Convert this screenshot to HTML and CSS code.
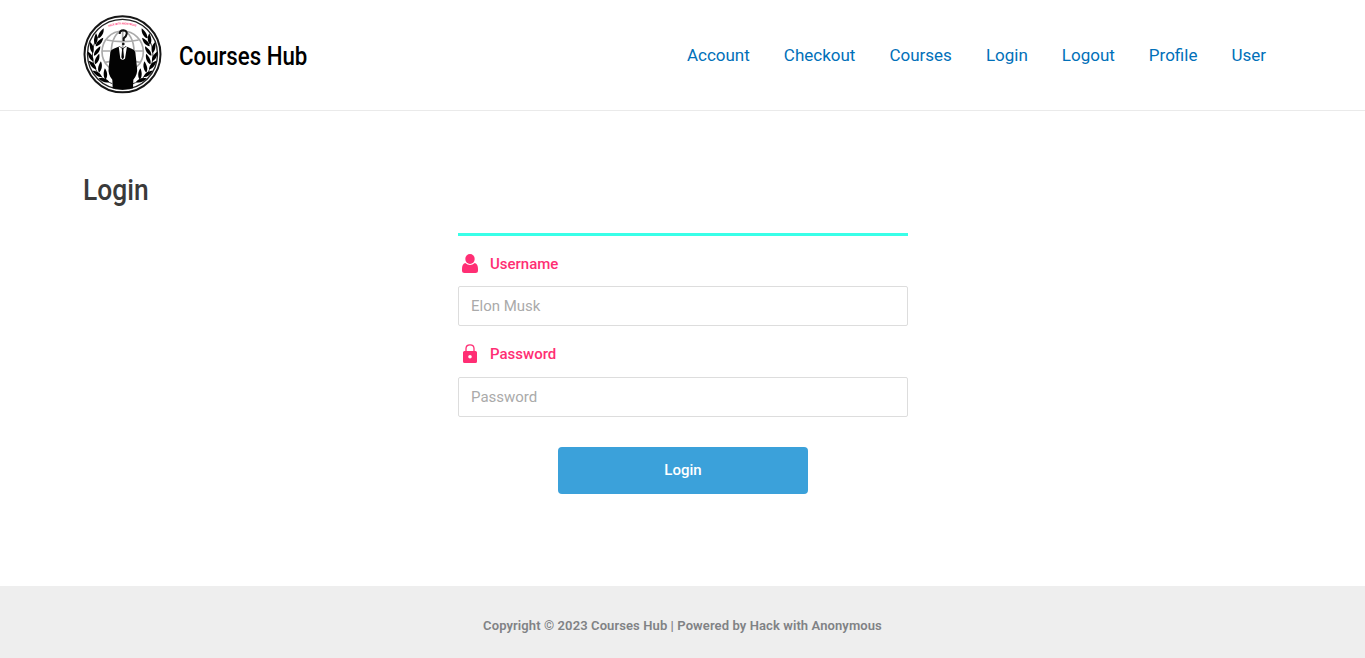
FILE: index.html
```html
<!DOCTYPE html>
<html lang="en">
<head>
<meta charset="utf-8">
<title>Login – Courses Hub</title>
<link rel="stylesheet" href="styles.css">
</head>
<body>
<header class="site-header">
  <div class="container header-row">
    <a class="brand" href="#">
      <svg class="logo" viewBox="20 16 237 237" aria-hidden="true">
        <defs>
          <path id="leaf" d="M0 0C-8-7-9-19-5-34C4-24 6-11 0 0Z"/>
          <g id="branch">
            <path d="M108 222C67 207 44 171 49 124C51 102 60 86 76 68" fill="none" stroke="#111" stroke-width="2.500"/>
            <use href="#leaf" transform="translate(66 86) rotate(36)"/>
            <use href="#leaf" transform="translate(57 105) rotate(12)"/>
            <use href="#leaf" transform="translate(58 110) rotate(50)"/>
            <use href="#leaf" transform="translate(50 130) rotate(-6)"/>
            <use href="#leaf" transform="translate(53 138) rotate(42)"/>
            <use href="#leaf" transform="translate(51 155) rotate(-22)"/>
            <use href="#leaf" transform="translate(56 164) rotate(30)"/>
            <use href="#leaf" transform="translate(60 179) rotate(-34)"/>
            <use href="#leaf" transform="translate(68 189) rotate(18)"/>
            <use href="#leaf" transform="translate(77 202) rotate(-48)"/>
            <use href="#leaf" transform="translate(88 210) rotate(4)"/>
            <use href="#leaf" transform="translate(99 217) rotate(-64)"/>
          </g>
        </defs>
        <circle cx="138.500" cy="134" r="114" fill="#fff" stroke="#161616" stroke-width="6"/>
        <circle cx="138.500" cy="134" r="105" fill="none" stroke="#222" stroke-width="4"/>
        <g fill="none" stroke="#aaa" stroke-width="5">
          <circle cx="139" cy="126" r="62"/>
          <ellipse cx="139" cy="126" rx="34" ry="62"/>
          <path d="M139 64V188M77 124H201M91 91Q139 101 187 91M86 158Q139 146 192 158"/>
        </g>
        <use href="#branch"/>
        <use href="#branch" transform="translate(278 0) scale(-1 1)"/>
        <path d="M109 236L108 210Q94 193 97 174L102 128Q104 119 112 117L130 110L139 116L148 110L166 117Q174 119 177 128L182 174Q185 193 171 210L170 236Q139 242 109 236Z" fill="#030303"/>
        <path d="M127 110L139 117L152 110L146 147L139 151L132 147Z" fill="#fff"/>
        <path d="M136 115H142L141 122L143 143L139 150L135 143L137 122Z" fill="#050505"/>
        <path d="M130 73Q130 62 141 62Q153 63 151 73Q150 80 142 86V94" fill="none" stroke="#111" stroke-width="6"/>
        <circle cx="141" cy="103" r="4" fill="#111"/>
        <path id="motto-path" d="M97 52Q139 37 182 52" fill="none"/>
        <text class="motto" textLength="84" lengthAdjust="spacingAndGlyphs"><textPath href="#motto-path">HACK WITH ANONYMOUS</textPath></text>
      </svg>
      <span class="site-title">Courses Hub</span>
    </a>
    <nav class="menu">
      <a href="#">Account</a><a href="#">Checkout</a><a href="#">Courses</a><a href="#">Login</a><a href="#">Logout</a><a href="#">Profile</a><a href="#">User</a>
    </nav>
  </div>
</header>
<main class="container content">
  <h1 class="page-title">Login</h1>
  <form class="login-form">
    <label class="field-label" for="username">
      <svg class="field-icon" viewBox="0 0 24 24" aria-hidden="true"><ellipse cx="12" cy="7" rx="4.700" ry="5"/><path d="M7.200 11.100Q12 15 16.800 11.100C19 11.500 20 14 20 17V18.500Q20 21 17.500 21H6.500Q4 21 4 18.500V17C4 14 5 11.500 7.200 11.100Z"/></svg>
      <span>Username</span>
    </label>
    <input class="field" id="username" type="text" placeholder="Elon Musk">
    <label class="field-label second" for="password">
      <svg class="field-icon" viewBox="0 0 24 24" aria-hidden="true"><path d="M8 10V6.500C8 1.600 16 1.600 16 6.500V10" fill="none" stroke="currentColor" stroke-width="1.300"/><path fill-rule="evenodd" d="M6.500 9H17.500Q19 9 19 10.500V19.500Q19 21 17.500 21H6.500Q5 21 5 19.500V10.500Q5 9 6.500 9ZM12 12.900A1.800 1.800 0 1 0 12 16.500A1.800 1.800 0 1 0 12 12.900Z"/></svg>
      <span>Password</span>
    </label>
    <input class="field" id="password" type="password" placeholder="Password">
    <button class="submit" type="button">Login</button>
  </form>
</main>
<footer class="site-footer">Copyright © 2023 Courses Hub | Powered by Hack with Anonymous</footer>
</body>
</html>
```
FILE: styles.css
```css
* { box-sizing: border-box; }
body {
  margin: 0;
  height: 658px;
  display: flex;
  flex-direction: column;
  background: #fff;
  color: #3a3a3a;
  font-family: Roboto, "Liberation Sans", sans-serif;
}
a { text-decoration: none; }
.container { width: 1200px; margin: 0 auto; }
.site-header { height: 111px; border-bottom: 1px solid #eaeaea; }
.header-row {
  height: 110px;
  display: flex;
  align-items: center;
  justify-content: space-between;
}
.brand { display: flex; align-items: center; color: #000; }
.logo { width: 79px; height: 79px; margin: 0 17px 2px 0; }
.motto { font: bold 9px "Liberation Sans", sans-serif; fill: #ff2e70; }
.site-title {
  padding-top: 1px;
  font-size: 26px;
  line-height: 32px;
  font-weight: 500;
  white-space: nowrap;
  transform: scaleX(.855);
  transform-origin: left;
}
.menu { display: flex; margin-right: -.500px; }
.menu a { padding: 0 17px; color: #0170b9; font-size: 17px; line-height: 26px; }
.brand, .page-title { margin-left: .500px; }
.content { flex: 1; }
.page-title {
  margin-top: 59px;
  margin-bottom: 0;
  height: 40px;
  font-size: 30px;
  line-height: 40px;
  font-weight: 500;
  transform: scaleX(.88);
  transform-origin: left;
}
.login-form {
  width: 450px;
  margin: 23px auto 0;
  border-top: 3px solid #39ffe8;
  display: flex;
  flex-direction: column;
}
.field-label {
  height: 24px;
  margin: 16px 0 10px;
  display: flex;
  align-items: center;
  color: #ff2e74;
  font-size: 15px;
  font-weight: 500;
}
.field-label.second { margin: 16px 0 11px; }
.field-icon { width: 24px; height: 24px; margin-right: 8.500px; fill: currentColor; }
.field {
  height: 40px;
  padding: 0 12.500px;
  border: 1px solid #ddd;
  border-radius: 2px;
  background: #fff;
  font: 15px Roboto, sans-serif;
}
.field::placeholder { color: #aaa; opacity: 1; }
.submit {
  width: 250px;
  height: 47px;
  margin: 30px auto 0;
  padding: 0 0 2px 1px;
  border: 0;
  border-radius: 4px;
  background: #3ba1da;
  color: #fff;
  font: 500 15px Roboto, sans-serif;
}
.site-footer {
  height: 72px;
  padding-top: 30px;
  background: #eee;
  color: #808285;
  text-align: center;
  font-size: 13px;
  line-height: 20px;
  font-weight: 600;
  letter-spacing: .1px;
}
```
